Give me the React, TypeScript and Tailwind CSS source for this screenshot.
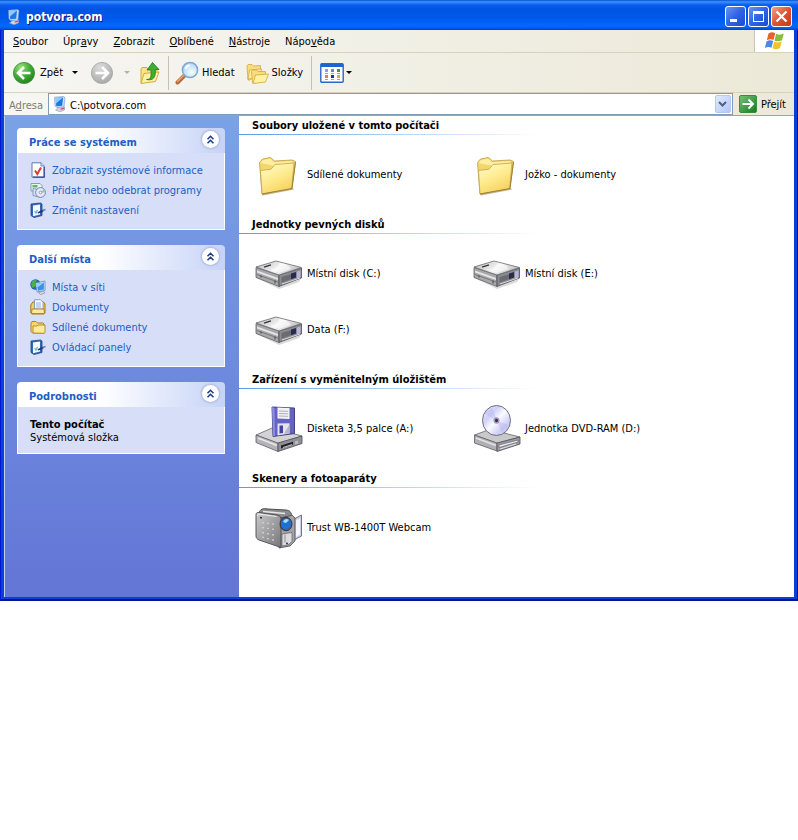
import { useState } from "react";
import type { ReactNode } from "react";

interface IconProps {
  className?: string;
}

function ComputerIcon({ className }: IconProps) {
  return (
    <svg viewBox="0 0 16 16" className={className}>
      <path d="M8 10.500l4.500.5v3L8 15.800 3.500 14z" fill="#d9d3e6" stroke="#8f8fae" strokeWidth=".6" />
      <path d="M2.500 1.200L11.500.5l1.500 1-1 9.500-7.500.5L3 10z" fill="#c3dffb" stroke="#6f93cc" strokeWidth=".6" />
      <path d="M3.800 2l7.200-.5-.8 8.300-6 .4z" fill="#1f78e0" />
      <path d="M3.800 2l7.200-.5-7 6z" fill="#8ccbfb" />
      <path d="M8.500 13.200l3.500-.8" stroke="#e04a6a" strokeWidth="1.200" />
    </svg>
  );
}

function BackIcon({ className }: IconProps) {
  return (
    <svg viewBox="0 0 24 24" className={className}>
      <defs>
        <radialGradient id="back" cx=".35" cy=".25" r=".85">
          <stop offset="0" stopColor="#9be07f" />
          <stop offset=".5" stopColor="#3fae35" />
          <stop offset="1" stopColor="#1d7a1c" />
        </radialGradient>
      </defs>
      <circle cx="12" cy="12" r="10.600" fill="url(#back)" stroke="#3d8d36" strokeWidth=".8" />
      <path d="M12 6l-6 6 6 6M6.500 12H18.500" fill="none" stroke="#fff" strokeWidth="2.600" />
    </svg>
  );
}

function ForwardIcon({ className }: IconProps) {
  return (
    <svg viewBox="0 0 24 24" className={className}>
      <defs>
        <radialGradient id="fwd" cx=".4" cy=".25" r=".85">
          <stop offset="0" stopColor="#dcdcdc" />
          <stop offset="1" stopColor="#a3a3a3" />
        </radialGradient>
      </defs>
      <circle cx="12" cy="12" r="10.600" fill="url(#fwd)" stroke="#a5a5a0" strokeWidth=".8" />
      <path d="M12 6l6 6-6 6M17.500 12H5.500" fill="none" stroke="#fff" strokeWidth="2.600" />
    </svg>
  );
}

function UpIcon({ className }: IconProps) {
  return (
    <svg viewBox="0 0 24 24" className={className}>
      <path d="M3 8l1-1.500h5L10 8h9v4l-3 8-13 2z" fill="#fbe28a" stroke="#d2a62c" strokeWidth=".9" />
      <path d="M3 22.500l3-10 15-1.500-3.500 9.500z" fill="#fff0a8" stroke="#d2a62c" strokeWidth=".9" />
      <path d="M8.500 18.500c4 .3 5-2.500 4.500-9.500H9L14.500 1.500 21 8.500h-3.800c.8 7.500-1.700 11.500-8.700 10z" fill="#3fae2e" stroke="#1d7a1c" strokeWidth=".8" />
    </svg>
  );
}

function SearchIcon({ className }: IconProps) {
  return (
    <svg viewBox="0 0 24 24" className={className}>
      <defs>
        <radialGradient id="lens" cx=".6" cy=".65" r=".7">
          <stop offset="0" stopColor="#f6fdff" />
          <stop offset="1" stopColor="#a5d5f5" />
        </radialGradient>
      </defs>
      <path d="M9.500 14.500L2.500 21.500" stroke="#b86b35" strokeWidth="4" strokeLinecap="round" />
      <path d="M8.500 14.500L2.500 20.500" stroke="#eba673" strokeWidth="1.400" strokeLinecap="round" />
      <circle cx="15" cy="9" r="7.600" fill="url(#lens)" stroke="#7fa8d8" strokeWidth="1.500" />
      <path d="M10.500 8c.8-2.300 2.300-3.500 4.500-3.600" fill="none" stroke="#fff" strokeWidth="1.600" />
    </svg>
  );
}

function FoldersIcon({ className }: IconProps) {
  return (
    <svg viewBox="0 0 24 24" className={className}>
      <g stroke="#d4a83a" strokeWidth=".8" strokeLinejoin="round">
        <path d="M2 5l1-1.500h4L8.500 5l7-.5v4L5 19H3z" fill="#f9dc7c" />
        <path d="M3 18L4.500 9l12-1-2 9z" fill="#fff0a8" />
        <path d="M6.500 10.500L7.500 9h4l1.500 1.500h7.500v3L18 20.500 9 22H7.500z" fill="#f9dc7c" />
        <path d="M8 22.500l2.500-8.500 13-1L20.500 21z" fill="#fff1a6" />
      </g>
    </svg>
  );
}

function ViewsIcon({ className }: IconProps) {
  return (
    <svg viewBox="0 0 24 20" className={className}>
      <rect x=".8" y=".8" width="22.400" height="18.400" rx="1" fill="#fff" stroke="#2a66c8" strokeWidth="1.400" />
      <path d="M1 1h22v3H1z" fill="#1f63d2" />
      <g>
        <path d="M5 6h3v3H5z" fill="#8f9be8" />
        <path d="M11 6h3v3h-3z" fill="#6f86b8" />
        <path d="M17 6h3v3h-3z" fill="#3c9a44" />
        <path d="M5 12h3v3H5z" fill="#ee7656" />
        <path d="M11 12h3v3h-3z" fill="#11399c" />
        <path d="M17 12h3v3h-3z" fill="#e2ad35" />
      </g>
      <path d="M5 10.500h3m3 0h3m3 0h3M5 16.500h3m3 0h3m3 0h3" stroke="#9aa4b8" strokeWidth="1" />
    </svg>
  );
}

function WindowsLogo({ className }: IconProps) {
  return (
    <svg viewBox="0 0 22 20" className={className}>
      <path d="M4.500 2.500C7 .8 9 .9 11.200 2.200L9.500 9C7.500 7.800 5.300 7.800 2.800 9.300z" fill="#e9622c" />
      <path d="M12.200 2.700c2.500 1.300 4.800 1.300 7.600-.2L18 9.200c-2.700 1.500-5 1.400-7.500.2z" fill="#86bd3a" />
      <path d="M2.500 10.400c2.500-1.500 4.600-1.500 6.700-.3l-1.700 6.700c-2-1.200-4.200-1.200-6.700.3z" fill="#4a8ae6" />
      <path d="M10.200 10.600c2.500 1.300 4.700 1.300 7.500-.2L16 17c-2.800 1.500-5 1.500-7.500.3z" fill="#f6c02c" />
    </svg>
  );
}

function GoIcon({ className }: IconProps) {
  return (
    <svg viewBox="0 0 18 18" className={className}>
      <defs>
        <linearGradient id="go" x2="1" y2="1">
          <stop stopColor="#76c27a" />
          <stop offset="1" stopColor="#147c1b" />
        </linearGradient>
      </defs>
      <rect x=".5" y=".5" width="17" height="17" rx="1.500" fill="url(#go)" stroke="#3c8a41" />
      <path d="M9.500 4.500L14 9l-4.500 4.500M13.500 9h-10" fill="none" stroke="#fff" strokeWidth="2" />
    </svg>
  );
}

function ArrowDown({ className }: IconProps) {
  return (
    <svg viewBox="0 0 6 3" className={className}>
      <path d="M0 0h6L3 3z" fill="currentColor" />
    </svg>
  );
}

/* ---- small task icons ---- */

function InfoTaskIcon({ className }: IconProps) {
  return (
    <svg viewBox="0 0 16 16" className={className}>
      <path d="M2 .8h9L14.200 4v11.200H2z" fill="#fff" stroke="#5f74b5" />
      <path d="M11 .8V4h3.200" fill="#cfdaf5" stroke="#5f74b5" strokeWidth=".8" />
      <path d="M14.200 5v10.200H3" fill="none" stroke="#33478c" strokeWidth="1.200" />
      <path d="M5 8.500l2.300 3.500L11 5.500" fill="none" stroke="#e03a35" strokeWidth="2" />
    </svg>
  );
}

function ProgramsTaskIcon({ className }: IconProps) {
  return (
    <svg viewBox="0 0 16 16" className={className}>
      <path d="M1 1.500h9l2 2V9H1z" fill="#eaf3ee" stroke="#83a0bb" />
      <path d="M2.500 3h5v2.500h-5z" fill="#67b36e" />
      <path d="M3 6.500l6 1V15l-6-1.500z" fill="#d7e3f5" stroke="#7288ad" strokeWidth=".8" />
      <circle cx="10.500" cy="10.500" r="4.900" fill="#e6e8fa" stroke="#6d79ae" strokeWidth=".9" />
      <path d="M10.500 10.500l3.200-3.200a4.500 4.500 0 011.200 3.200z" fill="#8fd08f" />
      <circle cx="10.500" cy="10.500" r="1.300" fill="#fff" stroke="#6d79ae" strokeWidth=".7" />
    </svg>
  );
}

function SettingsTaskIcon({ className }: IconProps) {
  return (
    <svg viewBox="0 0 16 16" className={className}>
      <path d="M1 2l9.500-1L12 2v11.500L4 15.500 1 13.500z" fill="#3768b5" stroke="#1f4280" strokeWidth=".8" />
      <path d="M3 3.500l7-1v10l-7 1.700z" fill="#f4f9ff" />
      <path d="M4.500 9l1.500 2 1.500-3" fill="none" stroke="#5bb6dd" strokeWidth="1.200" />
      <path d="M7.500 10.500l3.500-2.200 2-.5 1 1.200-2.500 1.600-3.500 1z" fill="#26376f" />
      <path d="M12.500 8.500l3-1" stroke="#5a7fc4" strokeWidth="1.400" />
    </svg>
  );
}

function NetworkTaskIcon({ className }: IconProps) {
  return (
    <svg viewBox="0 0 16 16" className={className}>
      <circle cx="5.500" cy="5.500" r="5.200" fill="#2463bd" />
      <path d="M2 2.500c2-2 4-1.800 5-1L5 4.500 6 7 3 9C1 7 .8 5 2 2.500z" fill="#4bb04a" />
      <path d="M5.500 4L15 2v9.500L7 13z" fill="#cfe4fb" stroke="#5b7fb8" strokeWidth=".7" />
      <path d="M6.700 5l7.200-1.500v7L8 11.700z" fill="#3c90ea" />
      <path d="M6.700 5l7.200-1.500-6.400 5z" fill="#96cffa" />
      <path d="M8.500 13.500l5-1.200 1.500 1.500-4.500 1.800z" fill="#dcdde8" stroke="#8287a3" strokeWidth=".7" />
    </svg>
  );
}

function DocumentsTaskIcon({ className }: IconProps) {
  return (
    <svg viewBox="0 0 16 16" className={className}>
      <path d="M.8 6l2-3h10.700L15 5v9l-1 1H2l-1.200-1z" fill="#f6d061" stroke="#a5761e" />
      <path d="M4.500.8h6L13 3.300V10H4.500z" fill="#fff" stroke="#6f86b8" strokeWidth=".8" />
      <path d="M6 4h5M6 6h5M6 8h5" stroke="#7ba2e7" strokeWidth=".9" />
      <path d="M1.500 14.500L2 10h12l.5 4.500z" fill="#ffe994" stroke="#a5761e" strokeWidth=".8" />
    </svg>
  );
}

function FolderTaskIcon({ className }: IconProps) {
  return (
    <svg viewBox="0 0 16 16" className={className}>
      <path d="M1 4l1-1.500h4L7.500 4H13l1 1v9H2.500L1 12.500z" fill="#f9d768" stroke="#b0832a" />
      <path d="M3 14V7h4l1-1h7v7.500l-.8.800z" fill="#ffeb9c" stroke="#b0832a" strokeWidth=".9" />
    </svg>
  );
}

/* ---- large item icons ---- */

function FolderIcon() {
  return (
    <svg viewBox="0 0 48 48" className="size-12 shrink-0">
      <defs>
        <linearGradient id="folder" x1=".2" x2=".7" y2="1">
          <stop stopColor="#fffbc4" />
          <stop offset=".5" stopColor="#feea8c" />
          <stop offset="1" stopColor="#f5cf58" />
        </linearGradient>
      </defs>
      <path d="M7 44l31-6 1 1.500L8 45.500z" fill="#6b5c2b" opacity=".45" />
      <path d="M4.500 12.500l3-3.500 8-1.500 4 3.500 17.500-1 3.500 1.500-3.500 26L7 44z" fill="#f5d66e" stroke="#bb9a45" strokeWidth=".8" strokeLinejoin="round" />
      <path d="M5.500 13l2.500-3 7-1.300 4 3.600 18.500-1.300-1.500 3L20 16z" fill="#fdeea2" />
      <path d="M5.500 20.500l10.500-1.300 4-4.700 19-1.500-2.500 26L7 44z" fill="url(#folder)" stroke="#c4a24c" strokeWidth=".8" strokeLinejoin="round" />
      <path d="M40.500 12l-3.500 26.500L7 44" fill="none" stroke="#a08136" strokeWidth="1" />
    </svg>
  );
}

function DiskIcon() {
  return (
    <svg viewBox="0 0 48 48" className="size-12 shrink-0">
      <defs>
        <linearGradient id="hdd" x1="0" x2="1" y2=".4">
          <stop stopColor="#b9b9bb" />
          <stop offset=".6" stopColor="#f3f3f4" />
          <stop offset="1" stopColor="#c2c2c6" />
        </linearGradient>
      </defs>
      <path d="M2 29l22 9 22-8-2 3-20 7z" fill="#000" opacity=".15" />
      <path d="M1 18.500L24 26v11.500L1 28.500z" fill="#a8a8ab" stroke="#5e5e63" strokeWidth=".8" />
      <path d="M24 26l22.500-7v10L24 37.500z" fill="#8b8b92" stroke="#4d4d55" strokeWidth=".8" />
      <path d="M1 18l20-6 25.500 6.500L24 26z" fill="url(#hdd)" stroke="#6b6b70" strokeWidth=".8" strokeLinejoin="round" />
      <path d="M24 13.500c6 1 10 3 12 6.500l-12 4-10-3.200c7-.8 10-4 10-7.300z" fill="#fff" opacity=".55" />
      <path d="M9 18.200l7-2.300" stroke="#333" strokeWidth="1.300" />
      <path d="M2 21.500l21 7.500v2L2 23.500z" fill="#e5e5e7" />
      <path d="M2 25.500l21 7.500" stroke="#6c6c70" strokeWidth=".8" />
      <path d="M6 26.500v2M20 31.500v3" stroke="#444" strokeWidth="1" />
      <path d="M26.500 28l10-3v5l-10 3.500z" fill="#6b6b72" />
      <path d="M36 24.500l5-1.500v5.500l-5 1.700z" fill="#262b50" />
      <path d="M42 22.500l3.500-1v6.500L42 29.500z" fill="#b7b4e0" />
      <path d="M27 35l18-6" stroke="#d5d5da" strokeWidth="1" />
    </svg>
  );
}

function FloppyIcon() {
  return (
    <svg viewBox="0 0 48 48" className="size-12 shrink-0">
      <path d="M1 31l16-7 30 8-24 7.500z" fill="#d3d3d6" stroke="#66666b" strokeWidth=".8" />
      <path d="M1 31l22 8v8.500L1 38.500z" fill="#b4b4b8" stroke="#5e5e63" strokeWidth=".8" />
      <path d="M23 39l24-7v7.500l-24 8z" fill="#8f8f95" stroke="#4d4d55" strokeWidth=".8" />
      <path d="M26 41.500l12-3.800v2.800l-12 4z" fill="#1f1f24" />
      <path d="M40 37.500l3-1v3l-3 1z" fill="#bdbdc4" />
      <path d="M28 43.500l9-3" stroke="#e7e7ea" strokeWidth=".8" />
      <path d="M3 34l19 7.500" stroke="#e9e9ec" strokeWidth="1.500" />
      <path d="M17 3l22.500 1v25.500L18 32.500z" fill="#6463c4" stroke="#35357c" strokeWidth=".9" />
      <path d="M17 3l2.500 1 .5 28-2 .3z" fill="#8d8ce0" />
      <path d="M22.500 3.500l12 .5v11l-12-.5z" fill="#f3f3f6" />
      <path d="M24 7l9 .3M24 9.500l9 .3M24 12l9 .3" stroke="#9a9aa3" strokeWidth=".8" />
      <path d="M22.500 19.500l12-.3v10.300l-12 2z" fill="#e4e4e9" />
      <path d="M24.500 21.500H28V29l-3.500.5z" fill="#4443a2" />
      <path d="M29 29.500l5.500-9v9z" fill="#b7b7bf" />
    </svg>
  );
}

function DvdIcon() {
  return (
    <svg viewBox="0 0 48 48" className="size-12 shrink-0">
      <defs>
        <linearGradient id="dvd" x2="1" y2="1">
          <stop stopColor="#f5f5ff" />
          <stop offset=".3" stopColor="#cfd0f8" />
          <stop offset=".5" stopColor="#fbfbff" />
          <stop offset=".75" stopColor="#cbccf4" />
          <stop offset="1" stopColor="#f1f1fa" />
        </linearGradient>
      </defs>
      <path d="M1.500 31l15-5.500L47 33l-23 6.500z" fill="#c9c9cc" stroke="#66666b" strokeWidth=".8" />
      <path d="M1.500 31L24 39v8L1.500 39z" fill="#b0b0b4" stroke="#5e5e63" strokeWidth=".8" />
      <path d="M24 39l23-6v7l-23 7.500z" fill="#9a9aa0" stroke="#4d4d55" strokeWidth=".8" />
      <path d="M26 41l19-5v2l-19 5.500z" fill="#f0f0f3" stroke="#55555c" strokeWidth=".6" />
      <path d="M27 45l16-5" stroke="#e2e2e8" strokeWidth="1" />
      <path d="M3 34l20 7.500" stroke="#e4e4e7" strokeWidth="1.400" />
      <ellipse cx="23.500" cy="16.500" rx="14" ry="15" fill="url(#dvd)" stroke="#6f6f7a" strokeWidth="1" />
      <path d="M24 16.500L12 10c1-3 4-6 7-7z" fill="#a7a8ec" opacity=".3" />
      <path d="M24 16.500l12 5c-1 4-4 7-7 8z" fill="#a7a8ec" opacity=".3" />
      <ellipse cx="23.500" cy="16.500" rx="3" ry="3.200" fill="#8688ba" opacity=".8" />
      <ellipse cx="23.500" cy="16.500" rx="1.500" ry="1.700" fill="#47234f" />
    </svg>
  );
}

function CameraIcon() {
  return (
    <svg viewBox="0 0 48 48" className="size-12 shrink-0">
      <defs>
        <linearGradient id="cam" x2="1" y2="1">
          <stop stopColor="#c9c9cb" />
          <stop offset="1" stopColor="#77777b" />
        </linearGradient>
      </defs>
      <path d="M39 16l7.500-4v21L39 37z" fill="#cfd0e6" stroke="#55566b" strokeWidth=".8" />
      <path d="M41 17.500l4-2v16l-4 2.500z" fill="#f4f5fd" />
      <path d="M4 10c1-4 4-5 9-4l18 1c4 .5 5 2 6 6l-12 2z" fill="#8b8b8f" stroke="#3f3f44" strokeWidth=".9" />
      <path d="M8 8.500l22 2" stroke="#e7e7ea" strokeWidth="1.500" />
      <path d="M24 16l13-4 3 3v23l-5 5-11 2z" fill="#a1a1a6" stroke="#4a4a50" strokeWidth=".8" />
      <path d="M1 12c0-2 1-3 3-2.500L22 12c3 .5 4 2 4 5v27.500L4 37c-2-1-3-2-3-4z" fill="url(#cam)" stroke="#4b4b50" strokeWidth=".9" />
      <path d="M2.500 13c0-1.500.8-2 2-1.800l17 2.300" fill="none" stroke="#efeff1" strokeWidth="1" />
      <path d="M5 14.500l2 .4" stroke="#222" strokeWidth="1.400" />
      <path d="M7 19.500l2 .3m3 .4l2 .3m3 .4l2 .3M7 24.500l2 .4m3 .5l2 .3m3 .4l2 .3M7 29.500l2 .5m3 .6l2 .4m3 .6l2 .4M7 34l2 .7m3 .7l2 .6m3 .7l2 .6" stroke="#d0d0d4" strokeWidth="1.300" />
      <ellipse cx="31" cy="21" rx="6" ry="6.800" fill="#55565f" stroke="#2b2b33" strokeWidth=".8" />
      <ellipse cx="31" cy="21" rx="5" ry="5.600" fill="#1c72d4" />
      <path d="M28 19c1-3 4-4 6-2l-3 3z" fill="#a9dcff" />
      <path d="M27 31l10-1.500v9L33 42l-6 1z" fill="#dcdce0" stroke="#606066" strokeWidth=".7" />
      <path d="M30 31.500v8" stroke="#8d8d93" strokeWidth="1" />
      <circle cx="32" cy="40.500" r="1" fill="#333" />
    </svg>
  );
}

const menuItems = [
  ["", "S", "oubor"],
  ["Úpr", "a", "vy"],
  ["", "Z", "obrazit"],
  ["", "O", "blíbené"],
  ["", "N", "ástroje"],
  ["Nápo", "v", "ěda"],
];

const sections = [
  {
    title: "Soubory uložené v tomto počítači",
    items: [
      { label: "Sdílené dokumenty", Icon: FolderIcon },
      { label: "Jožko - dokumenty", Icon: FolderIcon },
    ],
  },
  {
    title: "Jednotky pevných disků",
    items: [
      { label: "Místní disk (C:)", Icon: DiskIcon },
      { label: "Místní disk (E:)", Icon: DiskIcon },
      { label: "Data (F:)", Icon: DiskIcon },
    ],
  },
  {
    title: "Zařízení s vyměnitelným úložištěm",
    items: [
      { label: "Disketa 3,5 palce (A:)", Icon: FloppyIcon },
      { label: "Jednotka DVD-RAM (D:)", Icon: DvdIcon },
    ],
  },
  {
    title: "Skenery a fotoaparáty",
    items: [{ label: "Trust WB-1400T Webcam", Icon: CameraIcon }],
  },
];

const systemTasks = [
  { label: "Zobrazit systémové informace", Icon: InfoTaskIcon },
  { label: "Přidat nebo odebrat programy", Icon: ProgramsTaskIcon },
  { label: "Změnit nastavení", Icon: SettingsTaskIcon },
];

const otherPlaces = [
  { label: "Místa v síti", Icon: NetworkTaskIcon },
  { label: "Dokumenty", Icon: DocumentsTaskIcon },
  { label: "Sdílené dokumenty", Icon: FolderTaskIcon },
  { label: "Ovládací panely", Icon: SettingsTaskIcon },
];

interface TaskBoxProps {
  title: string;
  children: ReactNode;
}

function TaskBox({ title, children }: TaskBoxProps) {
  const [open, setOpen] = useState(true);

  return (
    <section>
      <div className="flex h-[25px] items-center justify-between rounded-t-[4px] bg-linear-to-r from-white from-40% to-[#c6d3f7] pr-1.5 pl-3">
        <h2 className="pt-1 font-bold text-[#215dc6]">{title}</h2>
        <button
          type="button"
          aria-label={title}
          aria-expanded={open}
          onClick={() => setOpen(!open)}
          className="mb-0.5 flex size-[17px] items-center justify-center rounded-full bg-white shadow-[0_0_2px_1px_#a9b5da]"
        >
          <svg viewBox="0 0 9 9" className="size-[9px]">
            <path d="M1.500 4.200l3-3 3 3M1.500 8.200l3-3 3 3" fill="none" stroke="#1c3a86" strokeWidth="1.500" />
          </svg>
        </button>
      </div>
      {open && (
        <div className="border border-t-0 border-white bg-[#d6dff7] px-3">{children}</div>
      )}
    </section>
  );
}

interface TaskListProps {
  items: { label: string; Icon: (props: IconProps) => ReactNode }[];
}

function TaskList({ items }: TaskListProps) {
  return (
    <ul className="pt-[7px] pb-[9px]">
      {items.map(({ label, Icon }) => (
        <li key={label}>
          <a href="#" className="flex h-5 items-center gap-1.5 whitespace-nowrap text-[#215dc6] hover:underline">
            <Icon className="size-4 shrink-0" />
            {label}
          </a>
        </li>
      ))}
    </ul>
  );
}

function App() {
  const [address, setAddress] = useState("C:\\potvora.com");

  return (
    <div className="min-h-screen bg-white font-['DejaVu_Sans_Condensed','DejaVu_Sans',sans-serif] text-[11px] leading-[13px] text-black">
      <div className="bg-[#0a3fd8] px-1 pb-1 shadow-[inset_1px_0_#0019cf,inset_-1px_-2px_#00138c]">
        <header className="-mx-1 flex h-[30px] items-center justify-between bg-[linear-gradient(180deg,#0a4fd0_0%,#3a93ff_6%,#0a5fee_16%,#0054e3_30%,#0058ea_60%,#0268ff_85%,#0060f5_93%,#0040c0_100%)] pr-1.5 pl-1.5">
          <div className="flex items-center gap-1 pt-1">
            <ComputerIcon className="size-4" />
            <h1 className="text-[12px] leading-4 font-bold text-white [text-shadow:1px_1px_#0a1883]">potvora.com</h1>
          </div>
          <div className="flex gap-0.5 pt-[3px]">
            <button
              type="button"
              aria-label="Minimalizovat"
              className="size-[21px] rounded-[3px] border border-white bg-linear-to-br from-[#6a93f0] via-[#2f62e6] to-[#1b4bd0]"
            >
              <svg viewBox="0 0 19 19">
                <path d="M4 12h7v3H4z" fill="#fff" />
              </svg>
            </button>
            <button
              type="button"
              aria-label="Maximalizovat"
              className="size-[21px] rounded-[3px] border border-white bg-linear-to-br from-[#6a93f0] via-[#2f62e6] to-[#1b4bd0]"
            >
              <svg viewBox="0 0 19 19">
                <path d="M4 4h11v11H4zM5 7v7h9V7z" fill="#fff" fillRule="evenodd" />
              </svg>
            </button>
            <button
              type="button"
              aria-label="Zavřít"
              className="size-[21px] rounded-[3px] border border-white bg-linear-to-br from-[#f0a08a] via-[#e0532f] to-[#c43a14]"
            >
              <svg viewBox="0 0 19 19">
                <path d="M4.500 4.500l10 10m0-10l-10 10" stroke="#fff" strokeWidth="2.200" />
              </svg>
            </button>
          </div>
        </header>

        <div className="bg-linear-to-r from-[#f6f6f3] to-[#ece9d8]">
          <nav className="flex h-[23px] items-stretch justify-between border-b border-[#d8d2bd]">
            <div className="flex items-center gap-[15px] pl-[9px]">
              {menuItems.map(([before, key, after]) => (
                <button type="button" key={before + key + after}>
                  {before}
                  <u>{key}</u>
                  {after}
                </button>
              ))}
            </div>
            <div className="flex w-10 items-center justify-center border-l border-[#c9c5b4] bg-white">
              <WindowsLogo className="h-5 w-[22px]" />
            </div>
          </nav>

          <div className="flex h-10 items-center border-b border-[#d8d2bd] pl-2">
            <button type="button" className="flex items-center gap-1">
              <BackIcon className="size-6" />
              Zpět
            </button>
            <button type="button" aria-label="Historie zpět" className="ml-[9px]">
              <ArrowDown className="h-[3px] w-1.5" />
            </button>
            <button type="button" aria-label="Vpřed" className="ml-3">
              <ForwardIcon className="size-6" />
            </button>
            <button type="button" aria-label="Historie vpřed" className="ml-2.5 text-[#b5b2a5]">
              <ArrowDown className="h-[3px] w-1.5" />
            </button>
            <button type="button" aria-label="Nahoru" className="ml-2">
              <UpIcon className="size-6" />
            </button>
            <div className="mx-1.5 h-[34px] w-px bg-[#c5c2b2]" />
            <button type="button" className="flex items-center gap-[3px]">
              <SearchIcon className="size-6" />
              Hledat
            </button>
            <button type="button" className="ml-2.5 flex items-center gap-[3px]">
              <FoldersIcon className="size-6" />
              Složky
            </button>
            <div className="mx-2 h-[34px] w-px bg-[#c5c2b2]" />
            <button type="button" aria-label="Zobrazení" className="flex items-center gap-0.5">
              <ViewsIcon className="h-5 w-6" />
              <ArrowDown className="h-[3px] w-1.5" />
            </button>
          </div>

          <form className="flex h-[23px] items-center border-b border-[#98a4ac]" onSubmit={(e) => e.preventDefault()}>
            <label htmlFor="address" className="w-11 shrink-0 pt-0.5 pl-[5px] text-[#7f7c73]">
              A<u>d</u>resa
            </label>
            <div className="flex h-[22px] grow items-center border border-[#7f9db9] bg-white pr-px pl-[3px]">
              <ComputerIcon className="size-4 shrink-0" />
              <input
                id="address"
                type="text"
                value={address}
                onChange={(e) => setAddress(e.target.value)}
                className="min-w-0 grow bg-transparent pt-0.5 pl-0.5 outline-none"
              />
              <button
                type="button"
                aria-label="Předchozí adresy"
                className="flex h-[18px] w-4 items-center justify-center rounded-[2px] border border-[#b5c8f5] bg-linear-to-br from-[#e1eafe] to-[#b3c7f6]"
              >
                <svg viewBox="0 0 9 6" className="h-1.5 w-[9px]">
                  <path d="M1 1l3.500 3.500L8 1" fill="none" stroke="#4d6185" strokeWidth="2" />
                </svg>
              </button>
            </div>
            <button type="submit" className="flex items-center gap-1 pr-2 pl-1.5">
              <GoIcon className="size-[18px]" />
              Přejít
            </button>
          </form>
        </div>

        <div className="flex items-stretch bg-white">
          <aside className="flex w-[235px] shrink-0 flex-col gap-[15px] border-l border-[#c4d2f0] bg-linear-to-b from-[#7ba2e7] to-[#6375d6] pt-3 pr-3.5 pb-5 pl-3">
            <TaskBox title="Práce se systémem">
              <TaskList items={systemTasks} />
            </TaskBox>
            <TaskBox title="Další místa">
              <TaskList items={otherPlaces} />
            </TaskBox>
            <TaskBox title="Podrobnosti">
              <div className="pt-[11px] pb-[9px]">
                <p className="font-bold">Tento počítač</p>
                <p>Systémová složka</p>
              </div>
            </TaskBox>
          </aside>

          <main className="min-w-0 grow pb-[29px]">
            {sections.map((section) => (
              <section key={section.title} className="pb-[13px]">
                <h2 className="pt-[3px] pb-0.5 pl-[13px] font-bold">{section.title}</h2>
                <div className="h-px w-[300px] bg-linear-to-r from-[#5a9be6] to-white" />
                <ul className="grid grid-cols-[repeat(auto-fill,218px)] pt-[11px] pl-4">
                  {section.items.map(({ label, Icon }) => (
                    <li key={label}>
                      <a href="#" className="flex h-14 items-center gap-1">
                        <Icon />
                        {label}
                      </a>
                    </li>
                  ))}
                </ul>
              </section>
            ))}
          </main>
        </div>
      </div>
    </div>
  );
}

export default App;
